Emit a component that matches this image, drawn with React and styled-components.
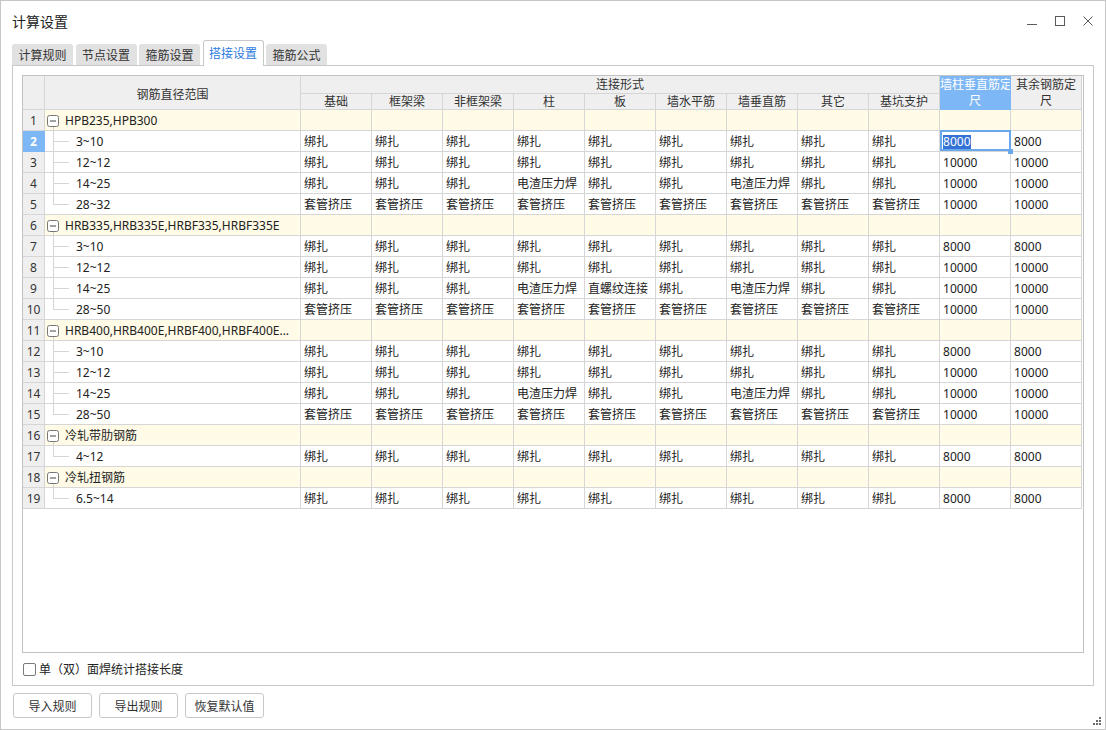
import styled, { createGlobalStyle, css } from "styled-components";

const GlobalStyle = createGlobalStyle`
  html, body { margin: 0; padding: 0; background: #fff; }
  body {
    font-family: "Noto Sans", "Noto Sans CJK SC", sans-serif;
    font-size: 12px;
    color: #222;
  }
  * { box-sizing: border-box; }
`;

const LINE = "#d6d6d6";
const HEAD_BG = "#efefef";
const GROUP_BG = "#fffbe6";
const PICK = "#7db7f5";

const Window = styled.div`
  width: 1106px;
  height: 730px;
  border: 1px solid #c6c6c6;
  background: #fff;
  display: flex;
  flex-direction: column;
`;

const TitleBar = styled.div`
  height: 39px;
  display: flex;
  align-items: center;
  padding: 0 12px 0 11px;
`;

const Title = styled.div`
  font-size: 14px;
  color: #222;
  flex: 1;
`;

const Controls = styled.div`
  display: flex;
  gap: 18px;
  color: #5a5a5a;
  svg { display: block; }
`;

const TabStrip = styled.div`
  height: 25px;
  display: flex;
  align-items: flex-end;
  gap: 2.5px;
  padding-left: 11px;
`;

const Tab = styled.div`
  width: 61px;
  height: 21px;
  display: flex;
  align-items: center;
  justify-content: center;
  border-radius: 3px 3px 0 0;
  background: #e1e1e1;
  color: #333;
  ${(p) =>
    p.$active &&
    css`
      position: relative;
      z-index: 1;
      height: 26px;
      margin-bottom: -1px;
      padding-bottom: 2px;
      background: #fff;
      border: 1px solid #c8c8c8;
      border-bottom: none;
      color: #2c7be0;
    `}
`;

const Panel = styled.div`
  margin: 0 11px;
  height: 621px;
  border: 1px solid #c8c8c8;
  padding: 9px 9px 0;
  display: flex;
  flex-direction: column;
`;

const GridBox = styled.div`
  height: 578px;
  border: 1px solid #c2c2c2;
  overflow: hidden;
`;

const Table = styled.table`
  border-collapse: separate;
  border-spacing: 0;
  table-layout: fixed;
  width: 1059px;
`;

const Head = styled.th`
  height: ${(p) => p.$h || 18}px;
  padding: ${(p) => (p.$pt ? `${p.$pt}px 0 0` : 0)};
  background: ${(p) => (p.$picked ? PICK : HEAD_BG)};
  color: ${(p) => (p.$picked ? "#fff" : "#333")};
  font-weight: normal;
  text-align: center;
  line-height: ${(p) => p.$lh || 16}px;
  border-right: 1px solid ${(p) => (p.$picked ? PICK : LINE)};
  border-bottom: 1px solid ${(p) => (p.$picked ? PICK : LINE)};
  white-space: nowrap;
  overflow: hidden;
`;

const NumCell = styled.td`
  height: 21px;
  padding: 1px 0 0;
  text-align: center;
  line-height: 18px;
  background: ${(p) => (p.$picked ? PICK : HEAD_BG)};
  color: ${(p) => (p.$picked ? "#fff" : "#333")};
  font-weight: ${(p) => (p.$picked ? "bold" : "normal")};
  border-right: 1px solid ${(p) => (p.$picked ? PICK : LINE)};
  border-bottom: 1px solid ${(p) => (p.$picked ? PICK : LINE)};
`;

const Cell = styled.td`
  height: 21px;
  padding: 1px 0 0 3px;
  line-height: 18px;
  white-space: nowrap;
  overflow: hidden;
  background: ${(p) => (p.$group ? GROUP_BG : "#fff")};
  border-right: 1px solid ${LINE};
  border-bottom: 1px solid ${LINE};
  ${(p) =>
    p.$selected &&
    css`
      position: relative;
      overflow: visible;
      &::after {
        content: "";
        position: absolute;
        top: -1px;
        left: 0;
        right: -1px;
        bottom: 0;
        border: 2px solid #6aa8ee;
      }
      &::before {
        content: "";
        position: absolute;
        right: -3px;
        bottom: -3px;
        width: 5px;
        height: 5px;
        background: #6aa8ee;
        z-index: 1;
      }
    `}
`;

const TreeCell = styled(Cell)`
  padding-left: 31px;
  background:
    linear-gradient(${LINE}, ${LINE}) 8px 0 / 1px ${(p) => (p.$last ? "11px" : "100%")} no-repeat,
    linear-gradient(${LINE}, ${LINE}) 9px 10px / 15px 1px no-repeat,
    #fff;
`;

const GroupCell = styled(Cell)`
  padding: 0 0 0 2px;
  background:
    linear-gradient(${LINE}, ${LINE}) 8px 16px / 1px 100% no-repeat,
    ${GROUP_BG};
`;

const GroupLabel = styled.span`
  display: flex;
  align-items: center;
  gap: 6px;
  height: 20px;
  padding-top: 1px;
  svg { display: block; flex: none; }
`;

const Marked = styled.span`
  background: #3473d5;
  color: #fff;
  line-height: 14px;
  display: inline-block;
`;

const OptionRow = styled.label`
  height: 32px;
  display: flex;
  align-items: center;
  gap: 3px;
  padding-left: 1px;
  color: #222;
`;

const Check = styled.span`
  width: 13px;
  height: 13px;
  border: 1px solid #7a7a7a;
  border-radius: 2px;
  background: #fff;
`;

const Footer = styled.div`
  flex: 1;
  display: flex;
  align-items: flex-start;
  gap: 7px;
  padding: 7px 3px 3px 12px;
`;

const Button = styled.button`
  width: 79px;
  height: 25px;
  border: 1px solid #c8c8c8;
  border-radius: 3px;
  background: #fff;
  color: #333;
  font: inherit;
  padding: 0;
`;

const Grip = styled.svg`
  margin-left: auto;
  align-self: flex-end;
  display: block;
`;

const B = "绑扎";
const T = "套管挤压";
const D = "电渣压力焊";
const Z = "直螺纹连接";
const bind = Array(9).fill(B);
const sleeve = Array(9).fill(T);
const weld = [B, B, B, D, B, B, D, B, B];
const weld2 = [B, B, B, D, Z, B, D, B, B];

const groups = [
  {
    name: "HPB235,HPB300",
    items: [
      ["3~10", bind, "8000", "8000"],
      ["12~12", bind, "10000", "10000"],
      ["14~25", weld, "10000", "10000"],
      ["28~32", sleeve, "10000", "10000"],
    ],
  },
  {
    name: "HRB335,HRB335E,HRBF335,HRBF335E",
    items: [
      ["3~10", bind, "8000", "8000"],
      ["12~12", bind, "10000", "10000"],
      ["14~25", weld2, "10000", "10000"],
      ["28~50", sleeve, "10000", "10000"],
    ],
  },
  {
    name: "HRB400,HRB400E,HRBF400,HRBF400E...",
    items: [
      ["3~10", bind, "8000", "8000"],
      ["12~12", bind, "10000", "10000"],
      ["14~25", weld, "10000", "10000"],
      ["28~50", sleeve, "10000", "10000"],
    ],
  },
  { name: "冷轧带肋钢筋", items: [["4~12", bind, "8000", "8000"]] },
  { name: "冷轧扭钢筋", items: [["6.5~14", bind, "8000", "8000"]] },
];

const kinds = ["基础", "框架梁", "非框架梁", "柱", "板", "墙水平筋", "墙垂直筋", "其它", "基坑支护"];

const Minus = () => (
  <svg width="12" height="12" viewBox="0 0 12 12">
    <rect x="0.5" y="0.5" width="11" height="11" rx="2" fill="#fff" stroke="#777" />
    <path d="M3 6h6" stroke="#444" strokeWidth="1" />
  </svg>
);

const App = () => {
  let n = 0;
  const rows = [];
  groups.forEach((g, gi) => {
    n += 1;
    rows.push(
      <tr key={`g${gi}`}>
        <NumCell>{n}</NumCell>
        <GroupCell $group>
          <GroupLabel>
            <Minus />
            {g.name}
          </GroupLabel>
        </GroupCell>
        {Array.from({ length: 11 }).map((_, i) => (
          <Cell key={i} $group />
        ))}
      </tr>
    );
    g.items.forEach((it, ii) => {
      n += 1;
      const sel = n === 2;
      rows.push(
        <tr key={`r${n}`}>
          <NumCell $picked={sel}>{n}</NumCell>
          <TreeCell $last={ii === g.items.length - 1}>{it[0]}</TreeCell>
          {it[1].map((v, i) => (
            <Cell key={i}>{v}</Cell>
          ))}
          <Cell $selected={sel}>{sel ? <Marked>{it[2]}</Marked> : it[2]}</Cell>
          <Cell>{it[3]}</Cell>
        </tr>
      );
    });
  });

  return (
    <>
      <GlobalStyle />
      <Window>
        <TitleBar>
          <Title>计算设置</Title>
          <Controls>
            <svg width="10" height="10" viewBox="0 0 10 10">
              <path d="M0 8.5h10" stroke="currentColor" />
            </svg>
            <svg width="10" height="10" viewBox="0 0 10 10">
              <rect x="0.5" y="0.5" width="9" height="9" fill="none" stroke="currentColor" />
            </svg>
            <svg width="10" height="10" viewBox="0 0 10 10">
              <path d="M0.5 0.5l9 9M9.5 0.5l-9 9" stroke="currentColor" />
            </svg>
          </Controls>
        </TitleBar>

        <TabStrip>
          <Tab>计算规则</Tab>
          <Tab>节点设置</Tab>
          <Tab>箍筋设置</Tab>
          <Tab $active>搭接设置</Tab>
          <Tab>箍筋公式</Tab>
        </TabStrip>

        <Panel>
          <GridBox>
            <Table>
              <colgroup>
                <col style={{ width: 22 }} />
                <col style={{ width: 256 }} />
                {Array.from({ length: 11 }).map((_, i) => (
                  <col key={i} style={{ width: 71 }} />
                ))}
              </colgroup>
              <thead>
                <tr>
                  <Head rowSpan={2} />
                  <Head rowSpan={2} $pt={5}>
                    钢筋直径范围
                  </Head>
                  <Head colSpan={9} $h={18}>
                    连接形式
                  </Head>
                  <Head rowSpan={2} $picked>
                    墙柱垂直筋定
                    <br />尺
                  </Head>
                  <Head rowSpan={2}>
                    其余钢筋定
                    <br />尺
                  </Head>
                </tr>
                <tr>
                  {kinds.map((k) => (
                    <Head key={k} $h={16} $lh={15}>
                      {k}
                    </Head>
                  ))}
                </tr>
              </thead>
              <tbody>{rows}</tbody>
            </Table>
          </GridBox>
          <OptionRow>
            <Check />
            单（双）面焊统计搭接长度
          </OptionRow>
        </Panel>

        <Footer>
          <Button>导入规则</Button>
          <Button>导出规则</Button>
          <Button>恢复默认值</Button>
          <Grip width="9" height="9" viewBox="0 0 9 9" fill="#6a6a6a">
            <rect x="6" y="0" width="2" height="2" />
            <rect x="3" y="3" width="2" height="2" />
            <rect x="6" y="3" width="2" height="2" />
            <rect x="0" y="6" width="2" height="2" />
            <rect x="3" y="6" width="2" height="2" />
            <rect x="6" y="6" width="2" height="2" />
          </Grip>
        </Footer>
      </Window>
    </>
  );
};

export default App;
